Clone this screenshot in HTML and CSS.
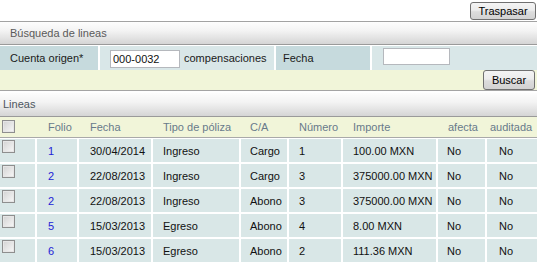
FILE: index.html
```html
<!DOCTYPE html>
<html lang="es">

<head>
    <meta charset="UTF-8">
    <meta name="viewport" content="width=device-width, initial-scale=1.0">
    <title>Traspaso de líneas</title>
    <link rel="stylesheet" href="styles.css">
</head>

<body>
    <!-- barra superior -->
    <div class="toolbar">
        <button class="btn btn-traspasar">Traspasar</button>
    </div>

    <!-- búsqueda -->
    <div class="panel-title">Búsqueda de lineas</div>
    <div class="search-row">
        <div class="label-cell cell-cuenta">Cuenta origen*</div>
        <div class="value-cell cell-cuenta-val">
            <input type="text" class="field field-cuenta" value="000-0032">
            <span class="hint">compensaciones</span>
        </div>
        <div class="label-cell cell-fecha">Fecha</div>
        <div class="value-cell cell-fecha-val">
            <input type="text" class="field field-fecha" value="">
        </div>
    </div>
    <div class="search-actions">
        <button class="btn btn-buscar">Buscar</button>
    </div>

    <!-- líneas -->
    <div class="panel-title lineas">Lineas</div>
    <table class="grid">
        <thead>
            <tr>
                <th class="col-chk"><input type="checkbox" class="chk"></th>
                <th class="col-folio">Folio</th>
                <th class="col-fecha">Fecha</th>
                <th class="col-tipo">Tipo de póliza</th>
                <th class="col-ca">C/A</th>
                <th class="col-num">Número</th>
                <th class="col-imp">Importe</th>
                <th class="col-afecta">afecta</th>
                <th class="col-aud">auditada</th>
            </tr>
        </thead>
        <tbody>
            <tr>
                <td class="col-chk"><input type="checkbox" class="chk"></td>
                <td class="col-folio"><a href="#">1</a></td>
                <td class="col-fecha">30/04/2014</td>
                <td class="col-tipo">Ingreso</td>
                <td class="col-ca">Cargo</td>
                <td class="col-num">1</td>
                <td class="col-imp">100.00 MXN</td>
                <td class="col-afecta">No</td>
                <td class="col-aud">No</td>
            </tr>
            <tr>
                <td class="col-chk"><input type="checkbox" class="chk"></td>
                <td class="col-folio"><a href="#">2</a></td>
                <td class="col-fecha">22/08/2013</td>
                <td class="col-tipo">Ingreso</td>
                <td class="col-ca">Cargo</td>
                <td class="col-num">3</td>
                <td class="col-imp">375000.00 MXN</td>
                <td class="col-afecta">No</td>
                <td class="col-aud">No</td>
            </tr>
            <tr>
                <td class="col-chk"><input type="checkbox" class="chk"></td>
                <td class="col-folio"><a href="#">2</a></td>
                <td class="col-fecha">22/08/2013</td>
                <td class="col-tipo">Ingreso</td>
                <td class="col-ca">Abono</td>
                <td class="col-num">3</td>
                <td class="col-imp">375000.00 MXN</td>
                <td class="col-afecta">No</td>
                <td class="col-aud">No</td>
            </tr>
            <tr>
                <td class="col-chk"><input type="checkbox" class="chk"></td>
                <td class="col-folio"><a href="#">5</a></td>
                <td class="col-fecha">15/03/2013</td>
                <td class="col-tipo">Egreso</td>
                <td class="col-ca">Abono</td>
                <td class="col-num">4</td>
                <td class="col-imp">8.00 MXN</td>
                <td class="col-afecta">No</td>
                <td class="col-aud">No</td>
            </tr>
            <tr>
                <td class="col-chk"><input type="checkbox" class="chk"></td>
                <td class="col-folio"><a href="#">6</a></td>
                <td class="col-fecha">15/03/2013</td>
                <td class="col-tipo">Egreso</td>
                <td class="col-ca">Abono</td>
                <td class="col-num">2</td>
                <td class="col-imp">111.36 MXN</td>
                <td class="col-afecta">No</td>
                <td class="col-aud">No</td>
            </tr>
        </tbody>
    </table>
</body>

</html>
```

FILE: styles.css
```css
/* base */
body {
    margin: 0;
    width: 537px;
    background: #fff;
    color: #111;
    font: 11px "Liberation Sans", Arial, sans-serif;
}

/* botones estilo windows */
.btn {
    margin: 0;
    padding: 0;
    box-sizing: border-box;
    border: 1px solid #707070;
    border-radius: 3px;
    background: linear-gradient(#f4f4f4, #ececec 45%, #dcdcdc 55%, #d2d2d2);
    color: #000;
    font: 11px "Liberation Sans", Arial, sans-serif;
}

.btn-traspasar {
    width: 66px;
    height: 18px;
}

.btn-buscar {
    width: 52px;
    height: 20px;
}

/* barra superior */
.toolbar {
    display: flex;
    justify-content: flex-end;
    height: 18px;
    padding: 2px 1px 1px 0;
}

/* títulos de panel */
.panel-title {
    height: 22px;
    line-height: 22px;
    padding-left: 10px;
    border-top: 1px solid #a2a2a2;
    border-bottom: 1px solid #9a9a9a;
    margin-bottom: 1px;
    background: linear-gradient(#fdfdfd, #f3f3f3 40%, #d5d5d5);
    color: #5a5a5a;
}

.panel-title.lineas {
    height: 23px;
    line-height: 23px;
    padding-left: 3px;
    border-top: none;
    margin-bottom: 0;
    color: #4e5660;
}

/* fila del formulario */
.search-row {
    display: flex;
    gap: 2px;
    height: 24px;
}

.label-cell,
.value-cell {
    display: flex;
    align-items: flex-start;
    line-height: 24px;
    color: #1a1a1a;
}

.label-cell {
    background: #c6dadd;
}

.value-cell {
    background: #d9e7e8;
}

.cell-cuenta {
    width: 88px;
    padding-left: 10px;
}

.cell-cuenta-val {
    width: 174px;
}

.cell-fecha {
    width: 87px;
    padding-left: 7px;
}

.cell-fecha-val {
    flex: 1;
}

.field {
    box-sizing: border-box;
    margin: 0;
    padding: 0 2px;
    border: 1px solid #b5b8bd;
    background: #fff;
    color: #111;
    font: 11px "Liberation Sans", Arial, sans-serif;
}

.field-cuenta {
    width: 70px;
    height: 18px;
    margin: 4px 0 0 10px;
}

.field-fecha {
    width: 67px;
    height: 17px;
    margin: 2px 0 0 11px;
}

.hint {
    margin-left: 4px;
}

/* acciones */
.search-actions {
    display: flex;
    justify-content: flex-end;
    height: 20px;
    padding-right: 2px;
    background: #f1f5d9;
    border-bottom: 1px solid #a4a4a4;
    margin-bottom: 2px;
}

/* tabla de líneas */
.grid {
    width: 537px;
    border-collapse: separate;
    border-spacing: 0;
    table-layout: fixed;
}

.grid th,
.grid td {
    box-sizing: border-box;
    padding: 0 0 0 10px;
    text-align: left;
    white-space: nowrap;
    overflow: hidden;
}

.grid th {
    height: 21px;
    background: #f1f5d9;
    border-bottom: 1px solid #a9a9a9;
    font-weight: normal;
    color: #687a8b;
}

.grid td {
    height: 25px;
    background: #d9e7e7;
    border-right: 2px solid #fff;
    border-bottom: 2px solid #fff;
    color: #111;
}

.grid td:last-child {
    border-right: none;
}

.grid tbody tr:first-child td {
    height: 26px;
    border-top: 1px solid #fff;
}

.grid a {
    color: #2222d6;
    text-decoration: none;
}

/* anchos de columna */
.col-chk { width: 37px; }
.col-folio { width: 42px; }
.col-fecha { width: 74px; }
.col-tipo { width: 88px; }
.col-ca { width: 48px; }
.col-num { width: 54px; }
.col-imp { width: 95px; }
.col-afecta { width: 49px; }
.col-aud { width: 50px; }

.grid .col-folio,
.grid .col-fecha {
    padding-left: 11px;
}

.grid .col-ca,
.grid td.col-afecta {
    padding-left: 9px;
}

.grid th.col-aud {
    padding-left: 3px;
}

.grid td.col-aud {
    padding-left: 12px;
}

.grid .col-chk {
    vertical-align: top;
    padding: 1px 0 0 2px;
}

.grid th.col-chk {
    padding-top: 3px;
}

/* casilla */
.chk {
    -webkit-appearance: none;
    appearance: none;
    display: block;
    width: 13px;
    height: 13px;
    margin: 0;
    border: 1px solid #8e8e8e;
    background: linear-gradient(135deg, #d2d2d2, #f8f8f8);
    box-shadow: inset 0 0 0 1px #e6e6e6;
}
```
